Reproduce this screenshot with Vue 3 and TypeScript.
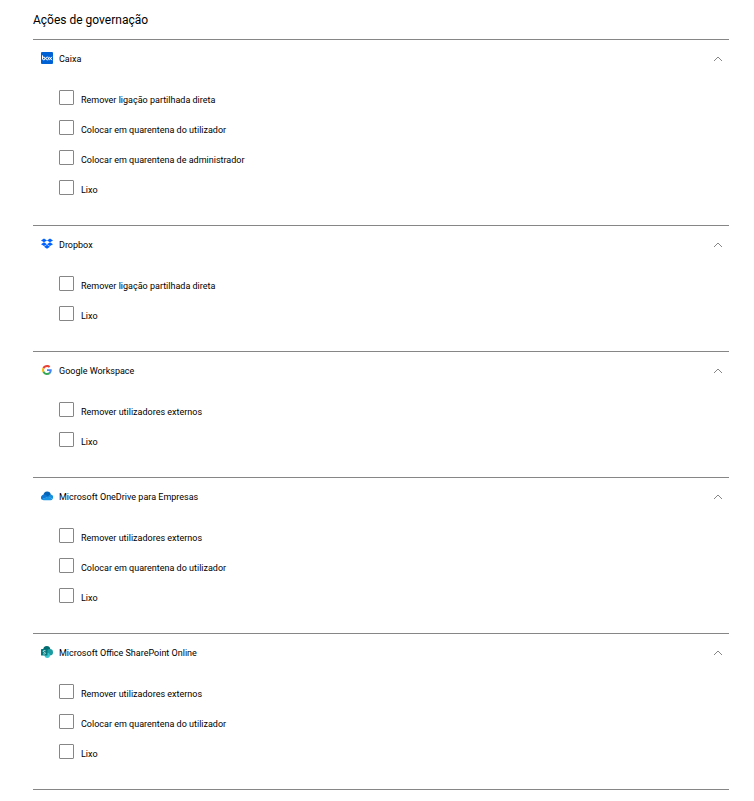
<script setup lang="ts">
import { reactive } from 'vue'

interface Action {
  label: string
  checked: boolean
}

interface AppSection {
  id: string
  name: string
  open: boolean
  actions: Action[]
}

const section = (id: string, name: string, labels: string[]): AppSection => ({
  id,
  name,
  open: true,
  actions: labels.map((label) => ({ label, checked: false })),
})

const sections = reactive<AppSection[]>([
  section('box', 'Caixa', [
    'Remover ligação partilhada direta',
    'Colocar em quarentena do utilizador',
    'Colocar em quarentena de administrador',
    'Lixo',
  ]),
  section('dropbox', 'Dropbox', ['Remover ligação partilhada direta', 'Lixo']),
  section('google', 'Google Workspace', ['Remover utilizadores externos', 'Lixo']),
  section('onedrive', 'Microsoft OneDrive para Empresas', [
    'Remover utilizadores externos',
    'Colocar em quarentena do utilizador',
    'Lixo',
  ]),
  section('sharepoint', 'Microsoft Office SharePoint Online', [
    'Remover utilizadores externos',
    'Colocar em quarentena do utilizador',
    'Lixo',
  ]),
])
</script>

<template>
  <main class="governance">
    <h1 class="title">Ações de governação</h1>
    <section v-for="s in sections" :key="s.id" class="app">
      <button
        type="button"
        class="app-header"
        :aria-expanded="s.open"
        :aria-controls="`actions-${s.id}`"
        @click="s.open = !s.open"
      >
        <svg v-if="s.id === 'box'" class="logo" viewBox="0 0 24 24" aria-hidden="true">
          <rect width="24" height="24" rx="2" fill="#0061d5" />
          <g fill="none" stroke="#fff" stroke-width="2" stroke-linecap="round">
            <path d="M3 7.5v6" />
            <circle cx="5.8" cy="13" r="2.8" />
            <circle cx="12.6" cy="13" r="2.8" />
            <path d="M17 10.2l4.4 5.6M21.4 10.2L17 15.8" />
          </g>
        </svg>
        <svg v-else-if="s.id === 'dropbox'" class="logo" viewBox="0 0 24 24" aria-hidden="true">
          <path
            fill="#0061ff"
            d="M6 1L0 4.800l6 3.800 6-3.800zM18 1l-6 3.800 6 3.800 6-3.800zM0 12.400l6 3.800 6-3.800-6-3.800zM18 8.600l-6 3.800 6 3.800 6-3.800zM6 17.500l6 3.800 6-3.800-6-3.800z"
          />
        </svg>
        <svg v-else-if="s.id === 'google'" class="logo" viewBox="-5 -5 58 58" aria-hidden="true">
          <path fill="#ea4335" d="M24 9.500c3.540 0 6.710 1.220 9.210 3.600l6.850-6.850C35.900 2.380 30.470 0 24 0 14.620 0 6.510 5.380 2.560 13.220l7.980 6.190C12.430 13.720 17.740 9.500 24 9.500z" />
          <path fill="#4285f4" d="M46.980 24.550c0-1.570-.15-3.090-.38-4.550H24v9.020h12.940c-.58 2.960-2.260 5.480-4.780 7.180l7.730 6c4.510-4.180 7.090-10.360 7.090-17.650z" />
          <path fill="#fbbc05" d="M10.530 28.590A14.500 14.500 0 0 1 9.770 24c0-1.600.27-3.140.76-4.590l-7.980-6.190A23.900 23.900 0 0 0 0 24c0 3.880.92 7.540 2.560 10.780z" />
          <path fill="#34a853" d="M24 48c6.480 0 11.930-2.130 15.890-5.810l-7.730-6c-2.150 1.450-4.920 2.300-8.160 2.300-6.260 0-11.570-4.220-13.470-9.910l-7.980 6.190C6.510 42.620 14.620 48 24 48z" />
        </svg>
        <svg v-else-if="s.id === 'onedrive'" class="logo" viewBox="0 0 24 24" aria-hidden="true">
          <path fill="#0364b8" d="M5 9.600A7.400 7.400 0 0 1 19.600 9L16 16z" />
          <path fill="#0f78d4" d="M6 8.800c1.300 0 2.400.3 3.500 1l5.500 3.500L1.300 19A6.300 6.300 0 0 1 6 8.800z" />
          <path fill="#1490df" d="M14 13l2-1.800a6.400 6.400 0 0 1 3.600-2.400A5.700 5.700 0 0 1 23.200 18z" />
          <path fill="#1c95e2" d="M14.500 12.800l8.700 5a4.800 4.800 0 0 1-4 2.900H6a5.800 5.800 0 0 1-4.800-2.200z" />
        </svg>
        <svg v-else class="logo" viewBox="0 0 24 24" aria-hidden="true">
          <circle cx="11.500" cy="7" r="7" fill="#036c70" />
          <circle cx="17.500" cy="12.500" r="6.500" fill="#1a9ba1" />
          <circle cx="12.500" cy="18.700" r="5.300" fill="#37c6d0" />
          <rect y="6" width="13" height="13" rx="1.200" fill="#03787c" />
          <path
            d="M9 9.500C7.500 8.600 4.500 8.600 4.500 10.700c0 2.300 4.400 1.300 4.400 3.700 0 2-3.200 2-4.800 1"
            fill="none"
            stroke="#fff"
            stroke-width="1.500"
          />
        </svg>
        <span class="app-name">{{ s.name }}</span>
        <svg class="chevron" :class="{ closed: !s.open }" viewBox="0 0 10 6" aria-hidden="true">
          <path d="M1 5l4-4 4 4" fill="none" stroke="#868686" />
        </svg>
      </button>
      <ul v-show="s.open" :id="`actions-${s.id}`" class="actions">
        <li v-for="(a, i) in s.actions" :key="a.label" class="action">
          <input :id="`${s.id}-${i}`" v-model="a.checked" type="checkbox" class="box" />
          <label :for="`${s.id}-${i}`">{{ a.label }}</label>
        </li>
      </ul>
    </section>
  </main>
</template>

<style>
body {
  margin: 0;
  background: #fff;
}
</style>

<style scoped>
.governance {
  padding: 10px 25px 11px 33px;
  color: #000;
  font-family: Roboto, "Liberation Sans", sans-serif;
  font-size: 9px;
}

.title {
  margin: 0 0 9px;
  font-size: 12px;
  font-weight: 400;
  line-height: 20px;
}

.app {
  border-top: 1px solid #868686;
}

.app:last-child {
  border-bottom: 1px solid #868686;
}

.app-header {
  display: flex;
  align-items: center;
  width: 100%;
  height: 38px;
  padding: 0 6px 0 8px;
  border: 0;
  background: none;
  color: inherit;
  font: inherit;
  text-align: left;
  cursor: pointer;
}

.logo {
  flex: none;
  width: 12px;
  height: 12px;
  margin: 0 6px 2px 0;
}

.app-name {
  flex: 1;
  line-height: 12px;
}

.chevron {
  width: 10px;
  height: 6px;
}

.chevron.closed {
  transform: rotate(180deg);
}

.actions {
  margin: 0;
  padding: 4px 0 23px 26px;
  list-style: none;
}

.action {
  display: flex;
  align-items: center;
  height: 30px;
}

.box {
  appearance: none;
  flex: none;
  width: 15px;
  height: 15px;
  margin: 0 7px 0 0;
  border: 1px solid #868686;
  border-radius: 1px;
  background: #fff;
}

.box:checked {
  background: #0061d5;
  box-shadow: inset 0 0 0 2px #fff;
}

.action label {
  padding-top: 6px;
  line-height: 14px;
}
</style>
